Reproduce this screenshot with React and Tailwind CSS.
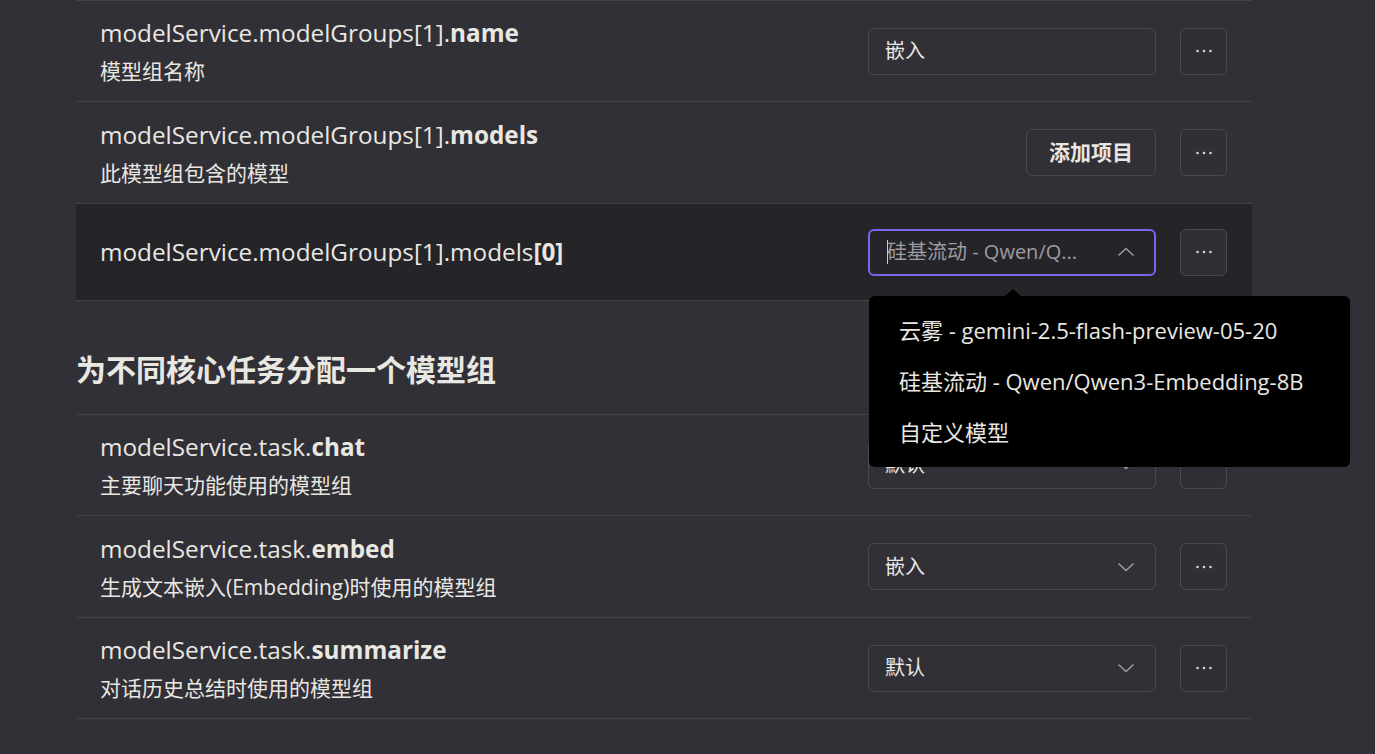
import React from 'react';

const font = { fontFamily: '"Open Sans", "Noto Sans CJK SC", sans-serif' };

function Dots() {
  return (
    <button className="flex h-[47px] w-[47px] shrink-0 items-center justify-center rounded-md border border-[#4a494f] bg-[#302f35]">
      <svg width="20" height="4" viewBox="0 0 20 4" fill="#d6d5d2">
        <circle cx="3.5" cy="2" r="1.3" />
        <circle cx="10" cy="2" r="1.3" />
        <circle cx="16.5" cy="2" r="1.3" />
      </svg>
    </button>
  );
}

function Chevron({ up }) {
  return (
    <svg width="18" height="10" viewBox="0 0 18 10" fill="none" stroke="#a3a2a7" strokeWidth="1.3">
      {up ? <polyline points="1.5,8.5 9,1.5 16.5,8.5" /> : <polyline points="1.5,1.5 9,8.5 16.5,1.5" />}
    </svg>
  );
}

function Row({ prefix, bold, desc, h, children }) {
  return (
    <div className={`flex items-center justify-between border-b border-[#434248] pl-6 pr-[25px] ${h}`}>
      <div className="flex flex-col">
        <div className="text-[24.3px] leading-[32px] text-[#e9e7e2]">
          {prefix}
          <span className="font-bold">{bold}</span>
        </div>
        <div className="mt-[8px] text-[21px] leading-[28px] text-[#e9e7e2]">{desc}</div>
      </div>
      <div className="flex items-center gap-6">
        {children}
        <Dots />
      </div>
    </div>
  );
}

function Select({ value }) {
  return (
    <div className="flex h-[47px] w-[288px] items-center justify-between rounded-md border border-[#4a494f] pl-4 pr-5 text-[20px] text-[#e9e7e2]">
      <span>{value}</span>
      <Chevron />
    </div>
  );
}

export default function App() {
  return (
    <div className="min-h-[754px] w-full bg-[#313036]" style={font}>
      <div className="ml-[76px] w-[1176px]">
        <div className="border-t border-[#434248]">
          <Row h="h-[101px]" prefix="modelService.modelGroups[1]." bold="name" desc="模型组名称">
            <div className="flex h-[47px] w-[288px] items-center rounded-md border border-[#4a494f] px-4 text-[20px] text-[#e9e7e2]">
              嵌入
            </div>
          </Row>
          <Row h="h-[102px]" prefix="modelService.modelGroups[1]." bold="models" desc="此模型组包含的模型">
            <button className="h-[47px] rounded-md border border-[#4a494f] px-[22px] text-[21px] font-bold text-[#e9e7e2]">
              添加项目
            </button>
          </Row>

          {/* active row */}
          <div className="flex h-[97px] items-center justify-between border-b border-[#434248] bg-[#252429] pl-6 pr-[25px]">
            <div className="text-[24.3px] leading-[32px] text-[#e9e7e2]">
              modelService.modelGroups[1].models<span className="font-bold">[0]</span>
            </div>
            <div className="flex items-center gap-6">
              <div className="relative">
                <div className="flex h-[47px] w-[288px] items-center justify-between rounded-md border-2 border-[#7866ee] pl-[17px] pr-[19px] text-[20px]">
                  <span className="flex items-center text-[#9d9ca1]">
                    <span className="-mr-px h-[24px] w-px bg-[#cfcdc8]" />
                    硅基流动 - Qwen/Q...
                  </span>
                  <Chevron up />
                </div>
                <div className="absolute left-px top-[67px] z-10 w-[481px] rounded-md bg-black py-[9px] text-[22px] text-[#e9e7e2]">
                  <div className="absolute -top-[7px] left-[136px] h-0 w-0 border-x-[8px] border-b-[7px] border-x-transparent border-b-black" />
                  <div className="flex h-[51px] items-center px-[30px]">云雾 - gemini-2.5-flash-preview-05-20</div>
                  <div className="flex h-[51px] items-center px-[30px]">硅基流动 - Qwen/Qwen3-Embedding-8B</div>
                  <div className="flex h-[51px] items-center px-[30px]">自定义模型</div>
                </div>
              </div>
              <Dots />
            </div>
          </div>
        </div>

        <h2 className="h-[113px] pt-[50px] text-[30px] font-bold leading-[38px] text-[#e9e7e2]">
          为不同核心任务分配一个模型组
        </h2>

        <div className="border-t border-[#434248]">
          <Row h="h-[101px]" prefix="modelService.task." bold="chat" desc="主要聊天功能使用的模型组">
            <Select value="默认" />
          </Row>
          <Row h="h-[102px]" prefix="modelService.task." bold="embed" desc="生成文本嵌入(Embedding)时使用的模型组">
            <Select value="嵌入" />
          </Row>
          <Row h="h-[101px]" prefix="modelService.task." bold="summarize" desc="对话历史总结时使用的模型组">
            <Select value="默认" />
          </Row>
        </div>
      </div>
    </div>
  );
}
